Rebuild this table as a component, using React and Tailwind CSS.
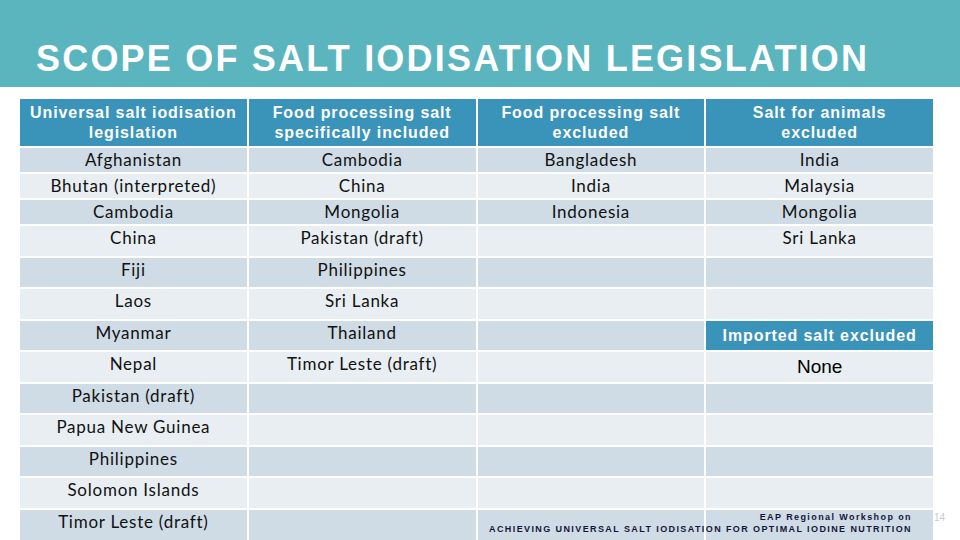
import React from 'react';

const rows = [
  { h: 'h-[24px]', cells: ['Afghanistan', 'Cambodia', 'Bangladesh', 'India'] },
  { h: 'h-[24px]', cells: ['Bhutan (interpreted)', 'China', 'India', 'Malaysia'] },
  { h: 'h-[24px]', cells: ['Cambodia', 'Mongolia', 'Indonesia', 'Mongolia'] },
  { h: 'h-[30px]', cells: ['China', 'Pakistan (draft)', '', 'Sri Lanka'] },
  { h: 'h-[29px]', cells: ['Fiji', 'Philippines', '', ''] },
  { h: 'h-[30px]', cells: ['Laos', 'Sri Lanka', '', ''] },
  { h: 'h-[29px]', cells: ['Myanmar', 'Thailand', '', 'head:Imported salt excluded'] },
  { h: 'h-[30px]', cells: ['Nepal', 'Timor Leste (draft)', '', 'none:None'] },
  { h: 'h-[29px]', cells: ['Pakistan (draft)', '', '', ''] },
  { h: 'h-[30px]', cells: ['Papua New Guinea', '', '', ''] },
  { h: 'h-[29px]', cells: ['Philippines', '', '', ''] },
  { h: 'h-[30px]', cells: ['Solomon Islands', '', '', ''] },
  { h: 'h-[30px]', cells: ['Timor Leste (draft)', '', '', ''] },
];

const headers = [
  ['Universal salt iodisation', 'legislation'],
  ['Food processing salt', 'specifically included'],
  ['Food processing salt', 'excluded'],
  ['Salt for animals', 'excluded'],
];

const Cell = ({ value, height, dark }) => {
  if (value.startsWith('head:')) {
    return (
      <div className={`${height} bg-[#3a93b9] flex items-center justify-center text-white font-bold text-[16px] tracking-[0.9px] font-['Liberation_Sans',Arial,sans-serif]`}>
        {value.slice(5)}
      </div>
    );
  }
  if (value.startsWith('none:')) {
    return (
      <div className={`${height} ${dark ? 'bg-[#cfdce6]' : 'bg-[#e8eef2]'} flex items-center justify-center text-black text-[19px] font-['Liberation_Sans',Arial,sans-serif]`}>
        {value.slice(5)}
      </div>
    );
  }
  return (
    <div className={`${height} ${dark ? 'bg-[#cfdce6]' : 'bg-[#e8eef2]'} text-center text-[#111] text-[17px] leading-[23px] tracking-[0.75px] font-['Lato','Open_Sans',sans-serif]`}>
      {value}
    </div>
  );
};

export default function App() {
  return (
    <div className="w-[960px] h-[540px] overflow-hidden bg-white relative">
      {/* Title band */}
      <div className="h-[87px] bg-[#5ab5bf] pt-[41px] pl-[36px]">
        <h1 className="text-white font-bold text-[36px] leading-none tracking-[2.2px] whitespace-nowrap font-['Liberation_Sans',Arial,sans-serif]">
          SCOPE OF SALT IODISATION LEGISLATION
        </h1>
      </div>

      {/* Table */}
      <div className="ml-[20px] mt-[12px] w-[913px] grid grid-cols-4 gap-[2px]">
        {headers.map((h, i) => (
          <div
            key={i}
            className="h-[47px] bg-[#3a93b9] flex flex-col items-center justify-center text-white font-bold text-[16px] leading-[20px] tracking-[0.9px] font-['Liberation_Sans',Arial,sans-serif]"
          >
            <span>{h[0]}</span>
            <span>{h[1]}</span>
          </div>
        ))}
        {rows.map((row, r) =>
          row.cells.map((c, i) => (
            <Cell key={`${r}-${i}`} value={c} height={row.h} dark={r % 2 === 0} />
          ))
        )}
      </div>

      {/* Footer */}
      <div className="absolute right-[48px] bottom-[5px] text-right text-[#15153a] font-bold text-[9px] leading-[12px] tracking-[1.4px] font-['Liberation_Sans',Arial,sans-serif]">
        <div>EAP Regional Workshop on</div>
        <div>ACHIEVING UNIVERSAL SALT IODISATION FOR OPTIMAL IODINE NUTRITION</div>
      </div>
      <div className="absolute left-[934px] top-[510px] text-[10px] text-[#c5ccd2] font-['Liberation_Sans',Arial,sans-serif]">
        14
      </div>
    </div>
  );
}
